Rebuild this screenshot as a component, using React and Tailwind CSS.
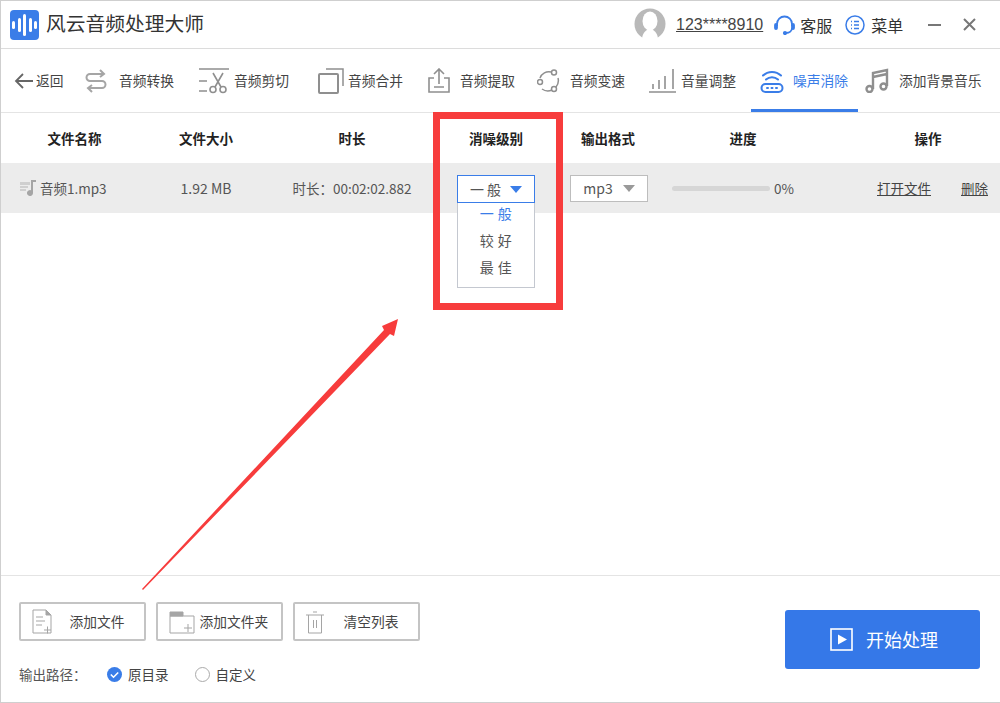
const cjk = "font-['Microsoft_YaHei','Noto_Sans_CJK_SC',sans-serif]";

function ConvertIcon() {
  return (
    <svg width="22" height="24" viewBox="0 0 22 24" fill="none" stroke="#a5a5a5" strokeWidth="2">
      <path d="M15 1l4 4-4 3M19 5H5a3.5 3.5 0 0 0 0 7h12a3.5 3.5 0 0 1 0 7H3M7 16l-4 3 4 4" />
    </svg>
  );
}

function CutIcon() {
  return (
    <svg width="30" height="26" viewBox="0 0 30 26" fill="none" stroke="#8f8f8f" strokeWidth="1.6">
      <path d="M0 1h30M0 13h8M0 23h8M14 5l8 14M24 5l-8 14" />
      <circle cx="14" cy="21.5" r="3" />
      <circle cx="24" cy="21.5" r="3" />
    </svg>
  );
}

function MergeIcon() {
  return (
    <svg width="26" height="26" viewBox="0 0 26 26" fill="none" stroke="#8f8f8f" strokeWidth="2">
      <rect x="1" y="6" width="19" height="19" rx="1" />
      <path d="M8 1h17v17" strokeWidth="1.5" />
    </svg>
  );
}

function ExtractIcon() {
  return (
    <svg width="22" height="25" viewBox="0 0 22 25" fill="none" stroke="#8f8f8f" strokeWidth="1.6">
      <path d="M6 10H1v14h20V10h-5M11 16V1M6 6l5-5 5 5M6 19h10" />
    </svg>
  );
}

function SpeedIcon() {
  return (
    <svg width="23" height="24" viewBox="0 0 23 24" fill="none" stroke="#8f8f8f" strokeWidth="1.5">
      <path d="M3 9a9.5 9.5 0 0 1 11-6M21 9a10 10 0 0 1-2 9M15 21a10 10 0 0 1-10-1" />
      <circle cx="17" cy="3.5" r="2.5" />
      <circle cx="3" cy="13" r="2.5" />
      <circle cx="17" cy="20" r="2.5" />
    </svg>
  );
}

function VolumeIcon() {
  return (
    <svg width="27" height="25" viewBox="0 0 27 25" fill="none" stroke="#8f8f8f" strokeWidth="1.6">
      <path d="M0 24h27M4 16v5M10 12v9M16 8v13M24 1v20" />
    </svg>
  );
}

function NoiseIcon() {
  return (
    <svg width="24" height="24" viewBox="0 0 24 24" fill="none" stroke="#3a7de8" strokeWidth="2">
      <path d="M3 6.5a13 13 0 0 1 18 0M6 10.5a9 9 0 0 1 12 0" strokeLinecap="round" />
      <rect x="1.5" y="15" width="21" height="8" rx="4" />
      <path d="M7 19h1M11.5 19h1M16 19h1" strokeLinecap="round" />
    </svg>
  );
}

function MusicIcon() {
  return (
    <svg width="24" height="25" viewBox="0 0 24 25" fill="none" stroke="#8f8f8f" strokeWidth="2.4">
      <path d="M8 21V5l14-3v16M8 9l14-3" />
      <circle cx="4.5" cy="21" r="3" />
      <circle cx="18.5" cy="18.5" r="3" />
    </svg>
  );
}

function Caret({ color }) {
  return <span className={`w-0 h-0 border-x-[6px] border-x-transparent border-t-[7px] ${color}`} />;
}

export default function App() {
  return (
    <div className={`relative w-[1000px] h-[703px] overflow-hidden bg-white border-y border-l border-[#cfcfcf] text-[#333] ${cjk}`}>
      {/* title bar */}
      <div className="h-[48px] flex items-center border-b border-[#dcdcdc]">
        <div className="ml-[9px] w-[29px] h-[30px] rounded-[4px] bg-[#3a7de8] flex items-center justify-center gap-[2.5px]">
          <span className="w-[3px] h-[8px] rounded bg-white" />
          <span className="w-[3px] h-[14px] rounded bg-white" />
          <span className="w-[3px] h-[22px] rounded bg-white" />
          <span className="w-[3px] h-[14px] rounded bg-white" />
          <span className="w-[3px] h-[8px] rounded bg-white" />
        </div>
        <span className="ml-[7px] mb-[3px] text-[19.75px] leading-none">风云音频处理大师</span>
        <svg className="ml-[430px] mb-[2px]" width="32" height="32" viewBox="0 0 32 32">
          <circle cx="16" cy="16" r="15.5" fill="#b9b9b9" />
          <ellipse cx="16" cy="13" rx="7.5" ry="9.5" fill="#fff" />
          <path d="M8 32c0-6 3-9 5-10h6c2 1 5 4 5 10z" fill="#fff" />
        </svg>
        <span className="ml-[10px] text-[16px] underline font-['Liberation_Sans'] text-[#444]">123****8910</span>
        <svg className="ml-[11px]" width="21" height="20" viewBox="0 0 21 20" fill="none" stroke="#3a7de8" strokeWidth="1.8">
          <path d="M3 11V9a7.5 7.5 0 0 1 15 0v2" />
          <path d="M18 13c0 3-2.5 5-6 5" />
          <rect x="1" y="9" width="2" height="5" rx="1" fill="#3a7de8" />
          <rect x="18" y="9" width="2" height="5" rx="1" fill="#3a7de8" />
          <circle cx="11" cy="18" r="1.2" fill="#3a7de8" />
        </svg>
        <span className="ml-[5px] text-[16px]">客服</span>
        <svg className="ml-[13px]" width="20" height="20" viewBox="0 0 20 20" fill="none" stroke="#3a7de8" strokeWidth="1.5">
          <circle cx="10" cy="10" r="9" />
          <path d="M6 6.5h1M9 6.5h5M6 10h1M9 10h5M6 13.5h1M9 13.5h5" />
        </svg>
        <span className="ml-[6px] text-[16px]">菜单</span>
        <span className="ml-[25px] w-[13px] h-[2px] bg-[#777]" />
        <svg className="ml-[22px]" width="13" height="13" viewBox="0 0 13 13" stroke="#777" strokeWidth="2">
          <path d="M1 1l11 11M12 1L1 12" />
        </svg>
      </div>

      {/* tab bar */}
      <div className="relative h-[64px] flex items-center border-b border-[#e4e4e4] text-[13.75px] text-[#444] whitespace-nowrap">
        <svg className="ml-[13px]" width="19" height="16" viewBox="0 0 19 16" fill="none" stroke="#666" strokeWidth="1.8">
          <path d="M19 8H2M9 1L2 8l7 7" />
        </svg>
        <span className="ml-[3px] w-[49px]">返回</span>
        <ConvertIcon />
        <span className="ml-[12px] w-[55px]">音频转换</span>
        <span className="ml-[25px]"><CutIcon /></span>
        <span className="ml-[5px] w-[55px]">音频剪切</span>
        <span className="ml-[29px]"><MergeIcon /></span>
        <span className="ml-[4px] w-[55px]">音频合并</span>
        <span className="ml-[25px]"><ExtractIcon /></span>
        <span className="ml-[10px] w-[55px]">音频提取</span>
        <span className="ml-[22px]"><SpeedIcon /></span>
        <span className="ml-[10px] w-[55px]">音频变速</span>
        <span className="ml-[24px]"><VolumeIcon /></span>
        <span className="ml-[5px] w-[55px]">音量调整</span>
        <span className="ml-[24px]"><NoiseIcon /></span>
        <span className="ml-[9px] w-[55px] text-[#3a7de8]">噪声消除</span>
        <span className="ml-[17px]"><MusicIcon /></span>
        <span className="ml-[10px]">添加背景音乐</span>
        <span className="absolute left-[750px] bottom-0 w-[107px] h-[3px] bg-[#3a7de8]" />
      </div>

      {/* table */}
      <div className="h-[50px] grid grid-cols-[147px_116px_176px_112px_112px_158px_212px] items-center text-center text-[13.5px] font-bold text-[#222]">
        <span>文件名称</span>
        <span>文件大小</span>
        <span>时长</span>
        <span>消噪级别</span>
        <span>输出格式</span>
        <span>进度</span>
        <span>操作</span>
      </div>
      <div className="h-[50px] grid grid-cols-[147px_116px_176px_112px_112px_158px_178px] items-center text-center text-[13.5px] text-[#555] bg-[#ececec]">
        <span className="flex items-center pl-[19px]">
          <svg width="17" height="16" viewBox="0 0 17 16">
            <path d="M0 2h10v3H0zM0 6h8v2H0zM0 9h6v2H0z" fill="#cfcfcf" />
            <path d="M11 0h5v2h-3v11a3 3 0 1 1-2-2.8z" fill="#a5a5a5" />
          </svg>
          <span className="ml-[3px]">音频1.mp3</span>
        </span>
        <span className="text-[14px]">1.92 MB</span>
        <span>时长：00:02:02.882</span>
        <span />
        <span className="flex justify-center">
          <span className="ml-[2px] w-[78px] h-[27px] flex items-center justify-center gap-[10px] bg-white border border-[#bdbdbd] text-[14px]">
            mp3
            <Caret color="border-t-[#9a9a9a]" />
          </span>
        </span>
        <span className="flex items-center pl-[8px]">
          <span className="w-[98px] h-[5px] rounded-full bg-[#d6d6d6]" />
          <span className="ml-[4px]">0%</span>
        </span>
        <span className="flex pl-[55px] text-[#444]">
          <span className="underline">打开文件</span>
          <span className="ml-[30px] underline">删除</span>
        </span>
      </div>

      <div className="h-[363px] border-b border-[#e4e4e4]" />

      {/* bottom */}
      <div className="flex justify-between">
        <div className="pl-[18px] pt-[26px]">
          <div className="flex gap-[10px] text-[13.75px] text-[#444]">
            <button className="relative w-[127px] h-[39px] border-2 border-[#c4c4c4] rounded-[2px] pl-[29px]">
              添加文件
              <svg className="absolute left-[11px] top-[5px]" width="21" height="26" viewBox="0 0 21 26" fill="none" stroke="#a5a5a5">
                <path d="M1 1h13l5 5v18H1z" />
                <path d="M14 1v5h5" fill="#a5a5a5" />
                <path d="M4 8h7M4 12h9M4 16h6M12 21h7M15.5 17.5v7" />
              </svg>
            </button>
            <button className="relative w-[127px] h-[39px] border-2 border-[#c4c4c4] rounded-[2px] pl-[29px]">
              添加文件夹
              <svg className="absolute left-[11px] top-[7px]" width="26" height="23" viewBox="0 0 26 23" fill="none" stroke="#a5a5a5">
                <path d="M1 1h13v4H1z" fill="#a5a5a5" />
                <path d="M1 5h24v17H1zM15 17h8M19 13v8" />
              </svg>
            </button>
            <button className="relative w-[127px] h-[39px] border-2 border-[#c4c4c4] rounded-[2px] pl-[29px]">
              清空列表
              <svg className="absolute left-[11px] top-[7px]" width="18" height="23" viewBox="0 0 18 23" fill="none" stroke="#a5a5a5">
                <path d="M0 4h18M7 1h4M2.5 4v18h13V4M7.5 9v8M10.5 9v8" />
              </svg>
            </button>
          </div>
          <div className="mt-[23px] flex items-center text-[13.5px] text-[#555]">
            <span className="w-[88px]">输出路径：</span>
            <svg width="15" height="15" viewBox="0 0 15 15">
              <circle cx="7.5" cy="7.5" r="7.5" fill="#3a7de8" />
              <path d="M3.8 7.5l2.7 2.7 4.7-4.7" fill="none" stroke="#fff" strokeWidth="1.6" />
            </svg>
            <span className="ml-[6px] text-[#444]">原目录</span>
            <span className="ml-[26px] w-[15px] h-[15px] rounded-full border border-[#aaa]" />
            <span className="ml-[6px] text-[#444]">自定义</span>
          </div>
        </div>
        <button className="mt-[34px] mr-[20px] w-[195px] h-[59px] pl-[3px] rounded-[3px] bg-[#3578e8] text-white text-[18px] flex items-center justify-center gap-[13px]">
          <svg width="23" height="23" viewBox="0 0 23 23" fill="none" stroke="#fff" strokeWidth="1.6">
            <rect x="1" y="1" width="21" height="21" />
            <path d="M8 6.5l9 5-9 5z" fill="#fff" stroke="none" />
          </svg>
          开始处理
        </button>
      </div>

      {/* noise level select, open */}
      <div className="absolute left-[456px] top-[174px] w-[78px] text-[14px] text-center">
        <div className="h-[28px] flex items-center justify-center gap-[9px] bg-white border border-[#3a7de8] text-[#555]">
          一 般
          <Caret color="border-t-[#3a7de8]" />
        </div>
        <div className="h-[85px] flex flex-col bg-white border border-t-0 border-[#c4c8d0] text-[#555] leading-[27px] tracking-[0.5px]">
          <div className="-mt-[3px] text-[#3a7de8]">一 般</div>
          <div>较 好</div>
          <div>最 佳</div>
        </div>
      </div>

      {/* annotation */}
      <div className="absolute left-[432px] top-[111px] w-[130px] h-[198px] border-[7px] border-[#f73c3c]" />
      <svg className="absolute left-[130px] top-[310px]" width="280" height="290" viewBox="130 310 280 290">
        <path d="M141 588L383 329L381 325L397 318L393 335L389 333L142 589z" fill="#f73c3c" />
      </svg>
    </div>
  );
}
